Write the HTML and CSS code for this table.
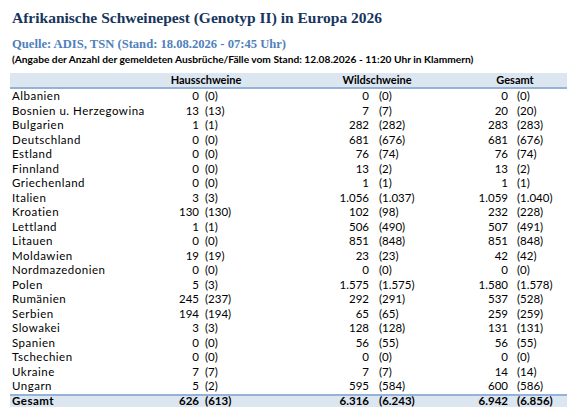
FILE: index.html
```html
<!DOCTYPE html>
<html>
<head>
    <meta charset="utf-8">
    <title>ASP in Europa 2026</title>
    <link rel="stylesheet" href="styles.css">
</head>
<body>
<div class="page">
    <h1 class="title">Afrikanische Schweinepest (Genotyp II) in Europa 2026</h1>
    <h2 class="source">Quelle: ADIS, TSN (Stand: 18.08.2026 - 07:45 Uhr)</h2>
    <p class="note">(Angabe der Anzahl der gemeldeten Ausbrüche/Fälle vom Stand: 12.08.2026 - 11:20 Uhr in Klammern)</p>

    <div class="table">
        <div class="head">
            <span></span>
            <span>Hausschweine</span>
            <span>Wildschweine</span>
            <span>Gesamt</span>
            <span></span>
        </div>
        <div class="row"><span>Albanien</span><span>0</span><span>(0)</span><span>0</span><span>(0)</span><span>0</span><span>(0)</span></div>
        <div class="row"><span>Bosnien u. Herzegowina</span><span>13</span><span>(13)</span><span>7</span><span>(7)</span><span>20</span><span>(20)</span></div>
        <div class="row"><span>Bulgarien</span><span>1</span><span>(1)</span><span>282</span><span>(282)</span><span>283</span><span>(283)</span></div>
        <div class="row"><span>Deutschland</span><span>0</span><span>(0)</span><span>681</span><span>(676)</span><span>681</span><span>(676)</span></div>
        <div class="row"><span>Estland</span><span>0</span><span>(0)</span><span>76</span><span>(74)</span><span>76</span><span>(74)</span></div>
        <div class="row"><span>Finnland</span><span>0</span><span>(0)</span><span>13</span><span>(2)</span><span>13</span><span>(2)</span></div>
        <div class="row"><span>Griechenland</span><span>0</span><span>(0)</span><span>1</span><span>(1)</span><span>1</span><span>(1)</span></div>
        <div class="row"><span>Italien</span><span>3</span><span>(3)</span><span>1.056</span><span>(1.037)</span><span>1.059</span><span>(1.040)</span></div>
        <div class="row"><span>Kroatien</span><span>130</span><span>(130)</span><span>102</span><span>(98)</span><span>232</span><span>(228)</span></div>
        <div class="row"><span>Lettland</span><span>1</span><span>(1)</span><span>506</span><span>(490)</span><span>507</span><span>(491)</span></div>
        <div class="row"><span>Litauen</span><span>0</span><span>(0)</span><span>851</span><span>(848)</span><span>851</span><span>(848)</span></div>
        <div class="row"><span>Moldawien</span><span>19</span><span>(19)</span><span>23</span><span>(23)</span><span>42</span><span>(42)</span></div>
        <div class="row"><span>Nordmazedonien</span><span>0</span><span>(0)</span><span>0</span><span>(0)</span><span>0</span><span>(0)</span></div>
        <div class="row"><span>Polen</span><span>5</span><span>(3)</span><span>1.575</span><span>(1.575)</span><span>1.580</span><span>(1.578)</span></div>
        <div class="row"><span>Rumänien</span><span>245</span><span>(237)</span><span>292</span><span>(291)</span><span>537</span><span>(528)</span></div>
        <div class="row"><span>Serbien</span><span>194</span><span>(194)</span><span>65</span><span>(65)</span><span>259</span><span>(259)</span></div>
        <div class="row"><span>Slowakei</span><span>3</span><span>(3)</span><span>128</span><span>(128)</span><span>131</span><span>(131)</span></div>
        <div class="row"><span>Spanien</span><span>0</span><span>(0)</span><span>56</span><span>(55)</span><span>56</span><span>(55)</span></div>
        <div class="row"><span>Tschechien</span><span>0</span><span>(0)</span><span>0</span><span>(0)</span><span>0</span><span>(0)</span></div>
        <div class="row"><span>Ukraine</span><span>7</span><span>(7)</span><span>7</span><span>(7)</span><span>14</span><span>(14)</span></div>
        <div class="row"><span>Ungarn</span><span>5</span><span>(2)</span><span>595</span><span>(584)</span><span>600</span><span>(586)</span></div>
        <div class="row total"><span>Gesamt</span><span>626</span><span>(613)</span><span>6.316</span><span>(6.243)</span><span>6.942</span><span>(6.856)</span></div>
    </div>
</div>
</body>
</html>
```

FILE: styles.css
```css
* {
    margin: 0;
    padding: 0;
}

body {
    background: #fff;
    font-family: Lato, "Liberation Sans", sans-serif;
    color: #000;
}

.page {
    padding: 8px 0 0 0;
}

.title {
    font-family: "Liberation Serif", serif;
    font-weight: bold;
    font-size: 15.5px;
    line-height: 20px;
    color: #17365d;
    padding-left: 12px;
}

.source {
    font-family: "Liberation Serif", serif;
    font-weight: bold;
    font-size: 12.6px;
    line-height: 16px;
    color: #4f81bd;
    padding: 8px 0 0 12px;
}

.note {
    font-size: 10.2px;
    line-height: 14px;
    font-weight: bold;
    padding-left: 12px;
}

.table {
    width: 557px;
    margin: 7px 0 0 10px;
    font-size: 11.5px;
}

.head {
    display: grid;
    grid-template-columns: 140px 112px 230px 46px 1fr;
    background: #dce6f1;
    border-bottom: 2px solid #95b3d7;
    height: 14px;
    line-height: 14px;
    font-size: 11px;
    font-weight: bold;
    text-align: center;
    white-space: nowrap;
}

.head span {
    display: flex;
    justify-content: center;
}

.row {
    display: grid;
    grid-template-columns: 150px 39px 116px 54px 91px 48px 59px;
    height: 14.5px;
    line-height: 14.5px;
    white-space: nowrap;
}

.row span:nth-child(1) {
    padding-left: 2px;
    letter-spacing: 0.5px;
}

.row span:nth-child(2),
.row span:nth-child(4),
.row span:nth-child(6) {
    text-align: right;
}

.row span:nth-child(3) {
    padding-left: 6px;
}

.row span:nth-child(5) {
    padding-left: 10px;
}

.row span:nth-child(7) {
    padding-left: 9px;
}

.total {
    background: #dce6f1;
    border-top: 2px solid #95b3d7;
    font-weight: bold;
    height: 11px;
    line-height: 9px;
}
```
